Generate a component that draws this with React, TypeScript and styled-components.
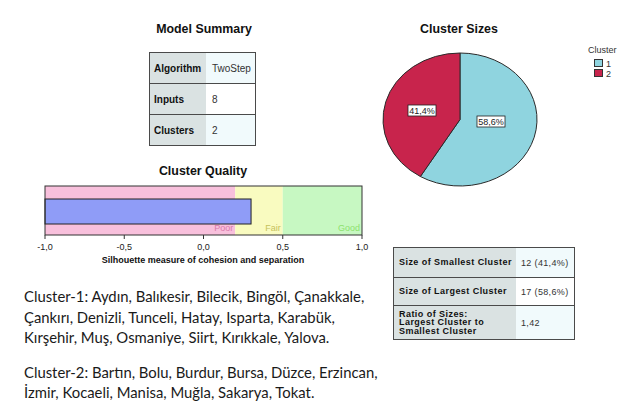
import React from "react";
import styled, { createGlobalStyle } from "styled-components";

const Global = createGlobalStyle`
  html, body { margin: 0; padding: 0; background: #ffffff; }
  #root { width: 640px; height: 414px; overflow: hidden; }
`;

const Page = styled.div`
  width: 640px;
  height: 414px;
  display: flex;
  background: #fff;
  font-family: "Liberation Sans", Arial, sans-serif;
  color: #1a1a1a;
`;

const LeftCol = styled.div`
  width: 375px;
  display: flex;
  flex-direction: column;
  align-items: flex-start;
  padding-top: 22px;
`;

const RightCol = styled.div`
  width: 265px;
  display: flex;
  flex-direction: column;
  align-items: flex-start;
  padding-top: 22px;
`;

const Title = styled.div<{ $center: number; $width: number }>`
  width: ${(p) => p.$width}px;
  margin-left: ${(p) => p.$center - p.$width / 2}px;
  text-align: center;
  font-weight: bold;
  font-size: 12.4px;
  line-height: 15px;
  color: #111;
`;

const SummaryTable = styled.table`
  margin-top: 15px;
  margin-left: 149px;
  border-collapse: collapse;
  border: 1px solid #4a4a4a;
  font-size: 10px;
  table-layout: fixed;
  width: 107px;
`;

const HeadCell = styled.th`
  width: 52px;
  height: 30px;
  padding: 0 0 0 4px;
  background: #dae2e2;
  text-align: left;
  font-weight: bold;
  border-top: 1px solid #4a4a4a;
  color: #111;
`;

const ValueCell = styled.td<{ $alt?: boolean }>`
  padding: 0 0 0 6px;
  background: ${(p) => (p.$alt ? "#ffffff" : "#f1fafc")};
  border-top: 1px solid #4a4a4a;
  color: #333;
`;

const QualityTitle = styled(Title)`
  margin-top: 18px;
`;

const Chart = styled.svg`
  display: block;
  width: 375px;
  height: 90px;
`;

const Notes = styled.div`
  margin-top: 17px;
  padding-left: 24px;
  font-family: Lato, "Noto Sans", sans-serif;
  font-size: 14.85px;
  line-height: 20.5px;
  color: #1a1a1a;
  white-space: nowrap;
`;

const Para = styled.p`
  margin: 0;
  & + & {
    margin-top: 14px;
  }
`;

const PieSvg = styled.svg`
  display: block;
  width: 265px;
  height: 150px;
  margin-top: 3px;
`;

const StatsTable = styled.table`
  margin-top: 57px;
  margin-left: 18px;
  border-collapse: collapse;
  border: 1px solid #4a4a4a;
  font-size: 9px;
  table-layout: fixed;
  width: 182px;
`;

const StatHead = styled.th<{ $h: number }>`
  width: 117px;
  height: ${(p) => p.$h}px;
  padding: 0 0 0 5px;
  background: #dae2e2;
  text-align: left;
  font-weight: bold;
  letter-spacing: 0.45px;
  line-height: 8.5px;
  border-top: 1px solid #4a4a4a;
  color: #111;
  white-space: nowrap;
`;

const StatValue = styled.td<{ $alt?: boolean }>`
  padding: 0 0 0 5px;
  background: ${(p) => (p.$alt ? "#ffffff" : "#f1fafc")};
  letter-spacing: 0.35px;
  border-top: 1px solid #4a4a4a;
  color: #333;
  white-space: nowrap;
`;

const X0 = 45;
const SCALE = 158.5;
const xv = (v: number) => X0 + (v + 1) * SCALE;

const ticks = [
  { v: -1, label: "-1,0" },
  { v: -0.5, label: "-0,5" },
  { v: 0, label: "0,0" },
  { v: 0.5, label: "0,5" },
  { v: 1, label: "1,0" },
];

function QualityChart() {
  return (
    <Chart viewBox="0 0 375 90">
      <rect x={xv(-1)} y={7} width={xv(0.2) - xv(-1)} height={49} fill="#f8c0dc" />
      <rect x={xv(0.2)} y={7} width={xv(0.5) - xv(0.2)} height={49} fill="#f9fbc0" />
      <rect x={xv(0.5)} y={7} width={xv(1) - xv(0.5)} height={49} fill="#c7f8c2" />
      <rect x={xv(-1)} y={20} width={xv(0.3) - xv(-1)} height={25} fill="#8f9cf7" stroke="#222" strokeWidth={1} />
      <rect x={xv(-1)} y={7} width={xv(1) - xv(-1)} height={49} fill="none" stroke="#333" strokeWidth={1} />
      <g fontFamily="Liberation Sans, Arial, sans-serif" fontSize={9} textAnchor="end">
        <text x={xv(0.2) - 2} y={52} fill="#d97aab">Poor</text>
        <text x={xv(0.5) - 2} y={52} fill="#c6c25c">Fair</text>
        <text x={xv(1) - 2} y={52} fill="#8de26e">Good</text>
      </g>
      {ticks.map((t) => (
        <line key={t.v} x1={xv(t.v)} x2={xv(t.v)} y1={56} y2={60} stroke="#333" strokeWidth={1} />
      ))}
      <g fontFamily="Liberation Sans, Arial, sans-serif" fontSize={9} textAnchor="middle" fill="#222">
        {ticks.map((t) => (
          <text key={t.v} x={xv(t.v)} y={71}>{t.label}</text>
        ))}
        <text x={203} y={84} fontWeight="bold" fill="#111">
          Silhouette measure of cohesion and separation
        </text>
      </g>
    </Chart>
  );
}

function PieChart() {
  const cx = 85;
  const cy = 79.5;
  const rx = 77;
  const ry = 66.5;
  const frac = 0.414;
  const a = frac * 2 * Math.PI;
  const ex = cx - rx * Math.sin(a);
  const ey = cy - ry * Math.cos(a);
  return (
    <PieSvg viewBox="0 0 265 150">
      <path
        d={`M${cx},${cy} L${cx},${cy - ry} A${rx},${ry} 0 1 1 ${ex},${ey} Z`}
        fill="#8fd4df"
        stroke="#2a2a2a"
        strokeWidth={1}
      />
      <path
        d={`M${cx},${cy} L${cx},${cy - ry} A${rx},${ry} 0 0 0 ${ex},${ey} Z`}
        fill="#c8244c"
        stroke="#2a2a2a"
        strokeWidth={1}
      />
      <g fontFamily="Liberation Sans, Arial, sans-serif" fontSize={9} fill="#222">
        <rect x={33} y={65} width={28} height={11} fill="#fff" stroke="#222" strokeWidth={0.8} />
        <text x={47} y={73.5} textAnchor="middle">41,4%</text>
        <rect x={102} y={76} width={28} height={11} fill="#fff" stroke="#222" strokeWidth={0.8} />
        <text x={116} y={84.5} textAnchor="middle">58,6%</text>
        <text x={213} y={13} fill="#333">Cluster</text>
        <rect x={219.5} y={19.5} width={8} height={7} fill="#8fd4df" stroke="#333" strokeWidth={1} />
        <text x={231} y={26.5} fill="#333">1</text>
        <rect x={219.5} y={29.5} width={8} height={7} fill="#c8244c" stroke="#333" strokeWidth={1} />
        <text x={231} y={36.5} fill="#333">2</text>
      </g>
    </PieSvg>
  );
}

export default function App() {
  return (
    <>
      <Global />
      <Page>
        <LeftCol>
          <Title $center={204} $width={140}>Model Summary</Title>
          <SummaryTable>
            <tbody>
              <tr>
                <HeadCell>Algorithm</HeadCell>
                <ValueCell>TwoStep</ValueCell>
              </tr>
              <tr>
                <HeadCell>Inputs</HeadCell>
                <ValueCell $alt>8</ValueCell>
              </tr>
              <tr>
                <HeadCell>Clusters</HeadCell>
                <ValueCell>2</ValueCell>
              </tr>
            </tbody>
          </SummaryTable>
          <QualityTitle $center={203} $width={140}>Cluster Quality</QualityTitle>
          <QualityChart />
          <Notes>
            <Para>
              Cluster-1: Aydın, Balıkesir, Bilecik, Bingöl, Çanakkale,
              <br />
              Çankırı, Denizli, Tunceli, Hatay, Isparta, Karabük,
              <br />
              Kırşehir, Muş, Osmaniye, Siirt, Kırıkkale, Yalova.
            </Para>
            <Para>
              Cluster-2: Bartın, Bolu, Burdur, Bursa, Düzce, Erzincan,
              <br />
              İzmir, Kocaeli, Manisa, Muğla, Sakarya, Tokat.
            </Para>
          </Notes>
        </LeftCol>
        <RightCol>
          <Title $center={84} $width={140}>Cluster Sizes</Title>
          <PieChart />
          <StatsTable>
            <tbody>
              <tr>
                <StatHead $h={29}>Size of Smallest Cluster</StatHead>
                <StatValue>12 (41,4%)</StatValue>
              </tr>
              <tr>
                <StatHead $h={27}>Size of Largest Cluster</StatHead>
                <StatValue $alt>17 (58,6%)</StatValue>
              </tr>
              <tr>
                <StatHead $h={33}>
                  Ratio of Sizes:
                  <br />
                  Largest Cluster to
                  <br />
                  Smallest Cluster
                </StatHead>
                <StatValue>1,42</StatValue>
              </tr>
            </tbody>
          </StatsTable>
        </RightCol>
      </Page>
    </>
  );
}
